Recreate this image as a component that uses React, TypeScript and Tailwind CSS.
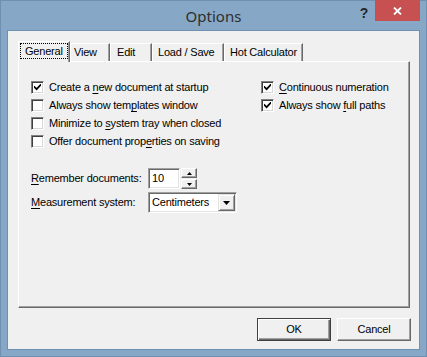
import React from "react";

const Check = () => (
  <svg width="7" height="7" viewBox="0 0 7 7" className="block">
    <path d="M0.5 3 L2.6 5.2 L6.5 1" stroke="#000" strokeWidth="1.7" fill="none" strokeLinecap="square" />
  </svg>
);

function CheckBox({ checked, children }: { checked?: boolean; children: React.ReactNode }) {
  return (
    <div className="flex items-center h-[13px] gap-[5px]">
      <div className="w-[13px] h-[13px] border border-t-[#808080] border-l-[#808080] border-r-white border-b-white shadow-[inset_1px_1px_#404040,inset_-1px_-1px_#d8d8d8] bg-white flex items-center justify-center shrink-0">
        {checked ? <Check /> : null}
      </div>
      <span className="leading-[13px] whitespace-nowrap">{children}</span>
    </div>
  );
}

const U = ({ children }: { children: React.ReactNode }) => (
  <span className="underline underline-offset-[2px] decoration-1">{children}</span>
);

function Tab({ children, w, pl }: { children: React.ReactNode; w: string; pl: string }) {
  return (
    <div
      className={`${w} ${pl} mt-[2px] h-[18px] border-l border-t border-r border-l-white border-t-white border-r-[#696969] shadow-[inset_-1px_0_#a0a0a0] flex items-center whitespace-nowrap`}
    >
      {children}
    </div>
  );
}

export default function App() {
  return (
    <div className="w-[427px] h-[357px] bg-[#86a8c6] border border-[#6f90b0] flex flex-col font-['Liberation_Sans',Arial,sans-serif] text-[11px] tracking-[-0.2px] text-black select-none">
      <div className="relative h-[29px] shrink-0 flex items-center justify-center">
        <span className="font-['Noto_Sans',sans-serif] text-[15px] tracking-normal text-[#2e2e2e] mt-[1px]">Options</span>
        <span className="absolute right-[58px] top-[2px] font-['Liberation_Sans',Arial,sans-serif] font-bold text-[14px] text-[#262626]">?</span>
        <div className="absolute right-[6px] top-[-1px] w-[45px] h-[21px] bg-[#c75050] flex items-center justify-center">
          <svg width="9" height="8" viewBox="0 0 9 8">
            <path d="M1 0.5 L8 7.5 M8 0.5 L1 7.5" stroke="#fff" strokeWidth="1.8" />
          </svg>
        </div>
      </div>
      <div className="mx-[6px] h-[320px] border border-[#6f90b0] bg-[#f0f0f0] flex flex-col">
        <div className="pt-[10px] pl-[10px] flex flex-col">
          <div className="flex h-[20px] items-start relative z-10">
            <div className="w-[52px] h-[21px] bg-[#f0f0f0] border-l border-t border-r border-l-white border-t-white border-r-[#696969] shadow-[inset_-1px_0_#a0a0a0] pl-[1px] pt-[1px]">
              <span className="inline-block border border-dotted border-black px-[4px] leading-[13px] h-[16px] pt-[1px]">General</span>
            </div>
            <Tab w="w-[40px]" pl="pl-[3px]">View</Tab>
            <Tab w="w-[42px]" pl="pl-[6px]">Edit</Tab>
            <Tab w="w-[72px]" pl="pl-[5px]">Load / Save</Tab>
            <Tab w="w-[79px]" pl="pl-[5px]">Hot Calculator</Tab>
          </div>
          <div className="w-[392px] h-[247px] border-l border-t border-r border-b border-l-white border-t-white border-r-[#696969] border-b-[#696969] shadow-[inset_-1px_-1px_#a0a0a0] pl-[12px] pt-[19px] flex flex-col">
            <div className="flex">
              <div className="w-[230px] flex flex-col gap-[5px]">
                <CheckBox checked>
                  Create a <U>n</U>ew document at startup
                </CheckBox>
                <CheckBox>
                  Always show tem<U>p</U>lates window
                </CheckBox>
                <CheckBox>
                  Minimize to <U>s</U>ystem tray when closed
                </CheckBox>
                <CheckBox>
                  Offer document prop<U>e</U>rties on saving
                </CheckBox>
              </div>
              <div className="flex flex-col gap-[5px]">
                <CheckBox checked>
                  <U>C</U>ontinuous numeration
                </CheckBox>
                <CheckBox checked>
                  Always show <U>f</U>ull paths
                </CheckBox>
              </div>
            </div>
            <div className="mt-[20px] flex flex-col gap-[3px]">
              <div className="flex items-center h-[21px]">
                <span className="w-[117px]">
                  <U>R</U>emember documents:
                </span>
                <div className="w-[32px] h-[21px] border border-t-[#a0a0a0] border-l-[#a0a0a0] border-r-white border-b-white shadow-[inset_1px_1px_#696969,inset_-1px_-1px_#e3e3e3] bg-white pl-[3px] flex items-center">
                  10
                </div>
                <div className="ml-[1px] w-[16px] h-[21px] flex flex-col gap-[1px]">
                  <div className="h-[10px] border border-t-white border-l-white border-r-[#696969] border-b-[#696969] shadow-[inset_-1px_-1px_#a0a0a0] flex items-center justify-center">
                    <svg width="5" height="3" viewBox="0 0 5 3"><path d="M2.5 0 L5 3 L0 3 Z" fill="#000" /></svg>
                  </div>
                  <div className="h-[10px] border border-t-white border-l-white border-r-[#696969] border-b-[#696969] shadow-[inset_-1px_-1px_#a0a0a0] flex items-center justify-center">
                    <svg width="5" height="3" viewBox="0 0 5 3"><path d="M0 0 L5 0 L2.5 3 Z" fill="#000" /></svg>
                  </div>
                </div>
              </div>
              <div className="flex items-center h-[21px]">
                <span className="w-[117px]">
                  <U>M</U>easurement system:
                </span>
                <div className="w-[89px] h-[21px] border border-t-[#a0a0a0] border-l-[#a0a0a0] border-r-white border-b-white shadow-[inset_1px_1px_#696969,inset_-1px_-1px_#e3e3e3] bg-white pl-[3px] pr-[1px] flex items-center justify-between">
                  <span>Centimeters</span>
                  <div className="w-[17px] h-[17px] bg-[#f0f0f0] border border-t-[#e3e3e3] border-l-[#e3e3e3] border-r-[#696969] border-b-[#696969] shadow-[inset_1px_1px_#fff,inset_-1px_-1px_#a0a0a0] flex items-center justify-center">
                    <svg width="7" height="4" viewBox="0 0 7 4"><path d="M0 0 L7 0 L3.5 4 Z" fill="#000" /></svg>
                  </div>
                </div>
              </div>
            </div>
          </div>
        </div>
        <div className="mt-[10px] flex justify-end gap-[6px] pr-[8px]">
          <div className="w-[74px] h-[23px] border border-[#404040] shadow-[inset_1px_1px_#fff,inset_-1px_-1px_#696969,inset_-2px_-2px_#a0a0a0] flex items-center justify-center">
            OK
          </div>
          <div className="w-[74px] h-[23px] border border-t-white border-l-white border-r-[#696969] border-b-[#696969] shadow-[inset_-1px_-1px_#a0a0a0] flex items-center justify-center">
            Cancel
          </div>
        </div>
      </div>
    </div>
  );
}
